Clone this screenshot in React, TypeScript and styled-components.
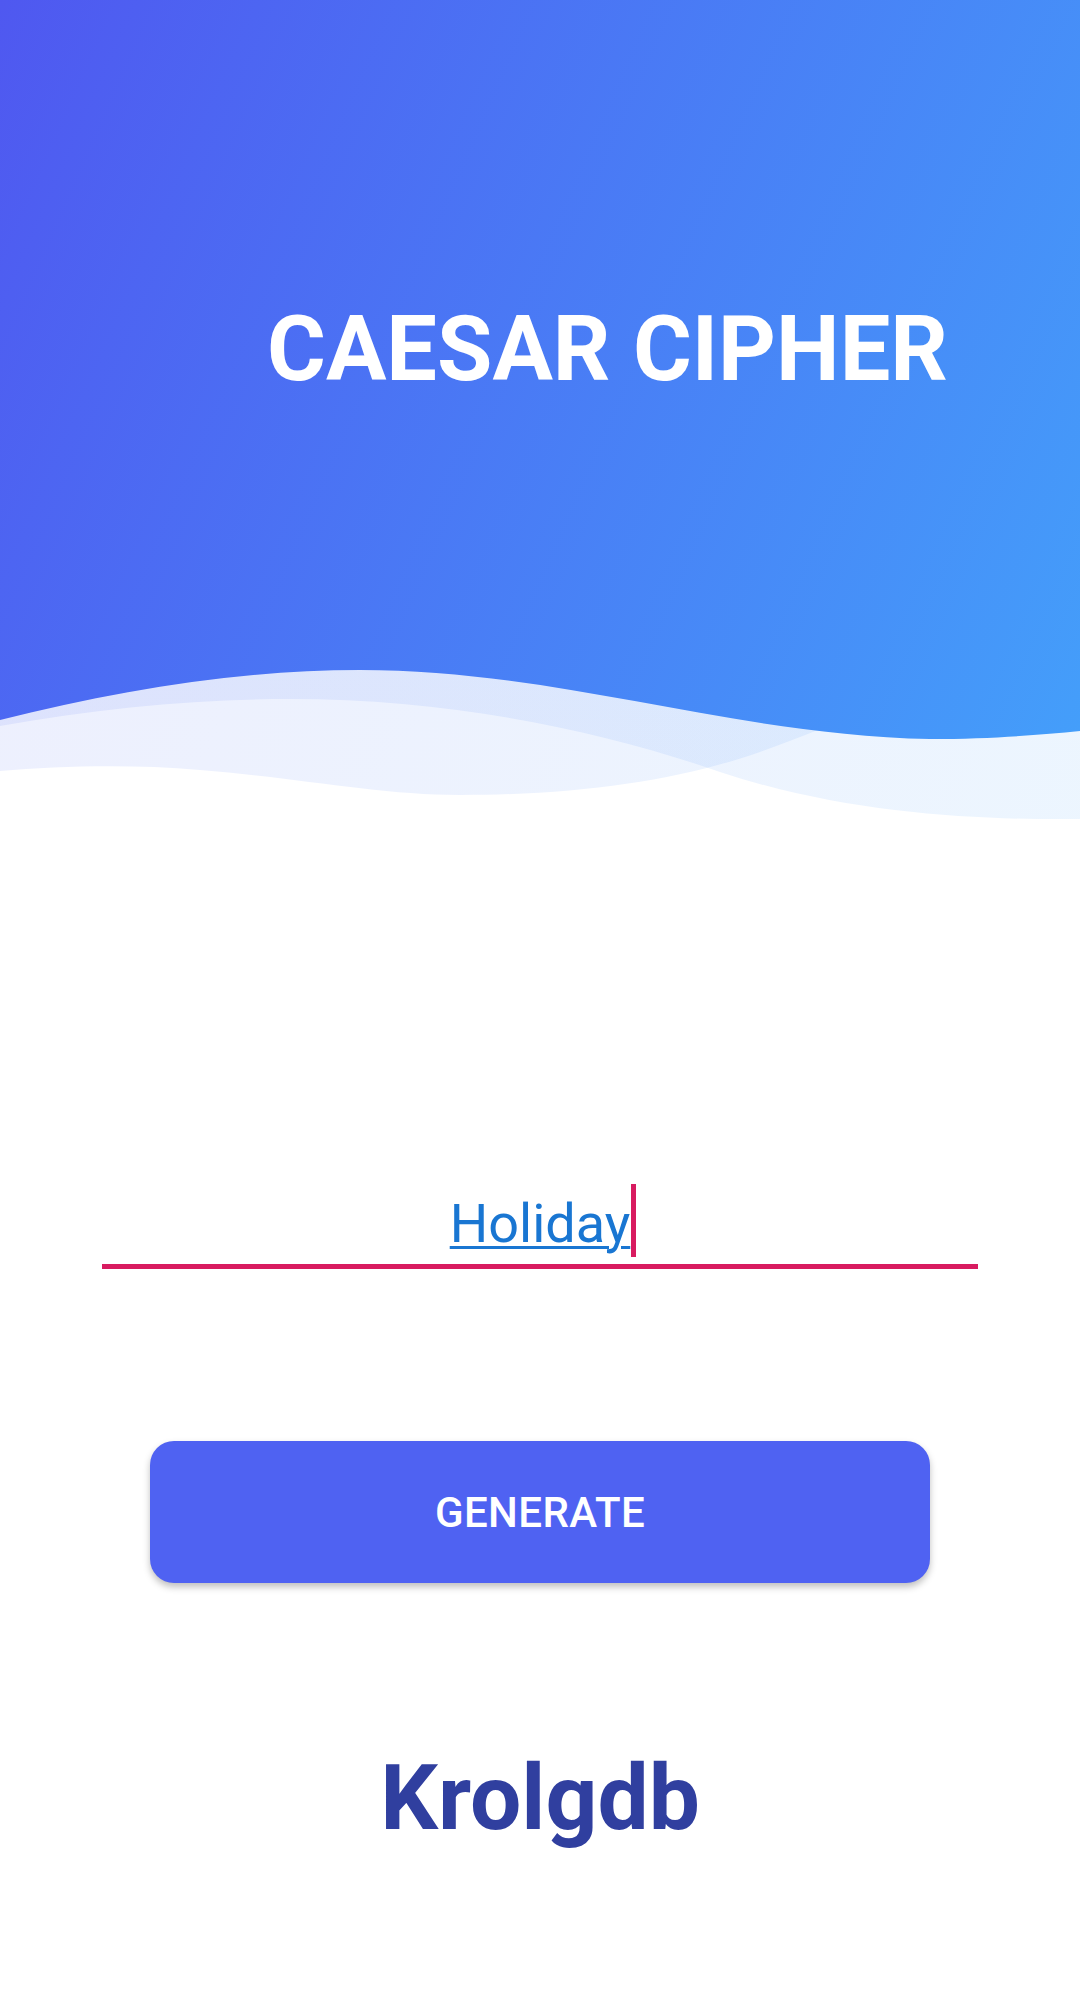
import React from "react";
import styled, { createGlobalStyle } from "styled-components";

const GlobalStyle = createGlobalStyle`
  html, body {
    margin: 0;
    padding: 0;
    background: #ffffff;
  }
  body {
    font-family: Roboto, "Noto Sans", "Liberation Sans", sans-serif;
  }
`;

const Page = styled.main`
  width: 1080px;
  min-height: 2008px;
  display: flex;
  flex-direction: column;
  background: #ffffff;
`;

const Hero = styled.header`
  position: relative;
  height: 820px;
`;

const HeroArt = styled.svg`
  position: absolute;
  inset: 0;
  width: 1080px;
  height: 820px;
  display: block;
`;

const Title = styled.h1`
  position: relative;
  margin: 0;
  padding: 296px 0 0 267px;
  font-family: Roboto, "Liberation Sans", sans-serif;
  font-weight: 700;
  font-size: 90px;
  letter-spacing: 0;
  line-height: 108px;
  color: #ffffff;
  white-space: nowrap;
`;

const Field = styled.div`
  margin: 372px 102px 0;
  padding-bottom: 9px;
  border-bottom: 5px solid #d81b60;
  text-align: center;
  font-family: Roboto, "Liberation Sans", sans-serif;
  font-size: 54px;
  line-height: 63px;
`;

const Typed = styled.span`
  position: relative;
  color: #1976d2;
  text-decoration: underline;
  text-decoration-color: #1976d2;
  text-decoration-thickness: 3px;
  text-underline-offset: 4px;

  &::after {
    content: "";
    position: absolute;
    left: 100%;
    margin-left: 1px;
    top: -8px;
    bottom: -2px;
    width: 5px;
    background: #d81b60;
  }
`;

const GenerateButton = styled.button`
  margin: 172px 150px 0;
  height: 142px;
  border: none;
  border-radius: 24px;
  background: #4f62f2;
  box-shadow: 0 4px 7px rgba(0, 0, 0, 0.25);
  color: #ffffff;
  font-family: Roboto, "Liberation Sans", sans-serif;
  font-weight: 500;
  font-size: 42px;
  letter-spacing: 0.4px;
  display: flex;
  align-items: center;
  justify-content: center;
  cursor: pointer;
`;

const Result = styled.p`
  margin: 162px 0 0;
  text-align: center;
  font-family: Roboto, "Liberation Sans", sans-serif;
  font-weight: 700;
  font-size: 91px;
  line-height: 107px;
  color: #303f9f;
`;

function Waves() {
  return (
    <HeroArt viewBox="0 0 1080 820" preserveAspectRatio="none" aria-hidden="true">
      <defs>
        <linearGradient id="heroGrad" gradientUnits="userSpaceOnUse" x1="0" y1="0" x2="1393" y2="611">
          <stop offset="0" stopColor="#4f58f0" />
          <stop offset="1" stopColor="#42abfc" />
        </linearGradient>
      </defs>
      <path
        d="M0 726 C 100 708, 200 699, 290 699 C 450 699, 600 730, 720 772 C 850 815, 980 820, 1080 819 V0 H0 Z"
        fill="url(#heroGrad)"
        opacity="0.1"
      />
      <path
        d="M0 771 C 60 766, 130 764, 200 770 C 300 778, 380 795, 460 795 C 580 795, 680 780, 760 752 C 860 716, 980 660, 1080 630 V0 H0 Z"
        fill="url(#heroGrad)"
        opacity="0.1"
      />
      <path
        d="M0 720 C 120 690, 240 670, 360 670 C 560 670, 730 735, 930 739 C 990 739, 1040 735, 1080 731 V0 H0 Z"
        fill="url(#heroGrad)"
      />
    </HeroArt>
  );
}

export default function App() {
  return (
    <>
      <GlobalStyle />
      <Page>
        <Hero>
          <Waves />
          <Title>CAESAR CIPHER</Title>
        </Hero>
        <Field>
          <Typed>Holiday</Typed>
        </Field>
        <GenerateButton type="button">GENERATE</GenerateButton>
        <Result>Krolgdb</Result>
      </Page>
    </>
  );
}
